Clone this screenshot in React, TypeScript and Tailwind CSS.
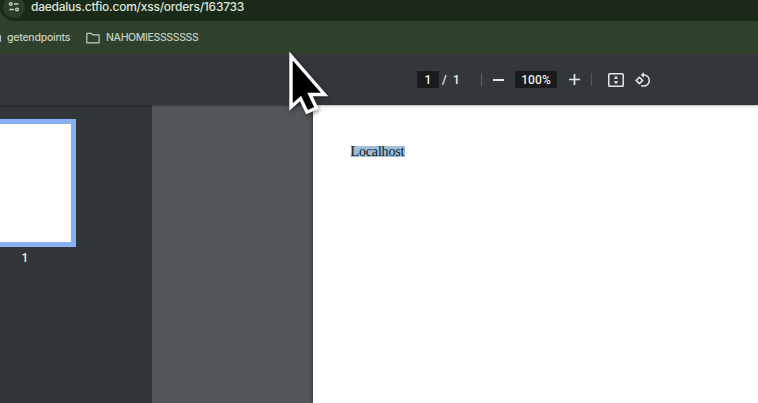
function TuneIcon() {
  return (
    <svg className="size-[14px]" viewBox="0 0 14 14" fill="none" stroke="#c8d6c2" strokeWidth="1.3">
      <circle cx="3.8" cy="4" r="1.4" />
      <path d="M7 4h4.5M2.3 9.5h4.5" />
      <circle cx="10" cy="9.5" r="1.4" />
    </svg>
  );
}

function FolderIcon() {
  return (
    <svg className="h-3 w-[14px]" viewBox="0 0 14 12" fill="none" stroke="#c3cfbf" strokeWidth="1.2" strokeLinejoin="round">
      <path d="M.8 1.4h4.4l1.5 1.5h6.4v7.9H.8z" />
    </svg>
  );
}

function FitPageIcon() {
  return (
    <svg className="h-[14px] w-4" viewBox="0 0 16 14">
      <rect x=".8" y=".8" width="14.4" height="12.4" rx=".8" fill="none" stroke="#e4e8ea" strokeWidth="1.5" />
      <path d="M8 2.7l2.3 3H5.7zM8 11.3l2.3-3H5.7z" fill="#e4e8ea" />
    </svg>
  );
}

function RotateIcon() {
  return (
    <svg className="size-4" viewBox="0 0 16 16" fill="none" stroke="#e4e8ea" strokeWidth="1.5">
      <path d="M4.4 5.2L7.6 8.4 4.4 11.6 1.2 8.4z" />
      <path d="M7 2.9h1.7a5.6 5.6 0 0 1 0 11.2c-.9 0-1.8-.2-2.5-.6" />
      <path d="M8.8.1v5.6L5.8 2.9z" fill="#e4e8ea" stroke="none" />
    </svg>
  );
}

function BrowserChrome() {
  return (
    <header className="font-['Inter','Liberation_Sans',sans-serif]">
      <div className="h-[21px] overflow-hidden bg-[#2f402d]">
        <div className="-mt-[7px] flex h-7 items-center rounded-bl-[14px] bg-[#1a2918] pl-[3px]">
          <span className="flex size-[22px] items-center justify-center rounded-full bg-[#2c3e2a]">
            <TuneIcon />
          </span>
          <span className="ml-[6px] whitespace-nowrap text-[12px] font-medium tracking-[-0.24px] text-[#dce5d8]">
            daedalus.ctfio.com/xss/orders/163733
          </span>
        </div>
      </div>
      <div className="flex h-[34px] items-center border-b border-[#414238] bg-[#2f402d] pt-px text-[#c3cfbf]">
        <span className="h-[7px] w-px rounded-r-full bg-[#b8c9da]" />
        <span className="ml-[6px] w-[78.5px] whitespace-nowrap text-[10.5px] font-medium tracking-[-0.24px]">getendpoints</span>
        <FolderIcon />
        <span className="ml-[6.5px] whitespace-nowrap text-[10.5px] font-medium tracking-[-0.36px]">NAHOMIESSSSSSS</span>
      </div>
    </header>
  );
}

function PdfToolbar() {
  return (
    <div className="relative z-10 flex h-[50px] items-center bg-[#33363a] pb-px pl-[417px] font-[Roboto,'Liberation_Sans',sans-serif] text-[12px] font-medium text-[#eceeef] shadow-[0_1px_2px_rgba(0,0,0,0.3)]">
      <span className="flex h-[17px] w-[22px] items-center justify-center bg-[#1a1b1d]">1</span>
      <span className="ml-[3px] w-[11px]">/</span>
      <span className="w-[28px]">1</span>
      <span className="h-[13px] w-px bg-[#606366]" />
      <span className="ml-[11px] h-[2px] w-[11px] bg-[#e4e8ea]" />
      <span className="ml-[11px] flex h-[17px] w-[42px] items-center justify-center bg-[#1a1b1d] tracking-[0.1px]">100%</span>
      <svg className="ml-3 size-[11px]" viewBox="0 0 11 11" stroke="#e4e8ea" strokeWidth="1.7">
        <path d="M5.5 0v11M0 5.5h11" />
      </svg>
      <span className="ml-[11px] h-[13px] w-px bg-[#55585b]" />
      <span className="ml-4"><FitPageIcon /></span>
      <span className="ml-[11px]"><RotateIcon /></span>
    </div>
  );
}

export default function App() {
  return (
    <div className="relative flex h-[403px] w-[758px] flex-col overflow-hidden bg-[#33363a]">
      <BrowserChrome />
      <PdfToolbar />
      <main className="flex min-h-0 flex-1">
        <aside className="w-[151.5px] shrink-0 bg-[#323639] pt-[13.5px]">
          <div className="h-[128px] w-[75.5px] border-y-[5px] border-r-[5px] border-[#8ab0f4] bg-white" />
          <div className="ml-[21.5px] mt-[3px] font-[Roboto,'Liberation_Sans',sans-serif] text-[12px] font-medium leading-4 text-[#eceeef]">1</div>
        </aside>
        <section className="flex flex-1 bg-[#525659] pl-[161px]">
          <div className="flex-1 bg-white pl-[38px] pt-[41px] shadow-[0_0_4px_rgba(0,0,0,0.5)]">
            <span className="block h-[11px] w-[54px] whitespace-nowrap bg-[#9fbfd9] font-['Liberation_Serif',serif] text-[14px] leading-[12px] tracking-[-0.15px] text-[#101b2b]">Localhost</span>
          </div>
        </section>
      </main>
      <svg className="absolute left-[286px] top-[50px] z-20 h-[70px] w-[46px] drop-shadow-[1px_2px_2px_rgba(0,0,0,0.4)]" viewBox="0 0 46 70">
        <path d="M5 6v51l9.5-8.5 6.5 13.5 9.5-4-6.5-13.5H38.5z" fill="#000" stroke="#fff" strokeWidth="3.4" />
      </svg>
    </div>
  );
}
